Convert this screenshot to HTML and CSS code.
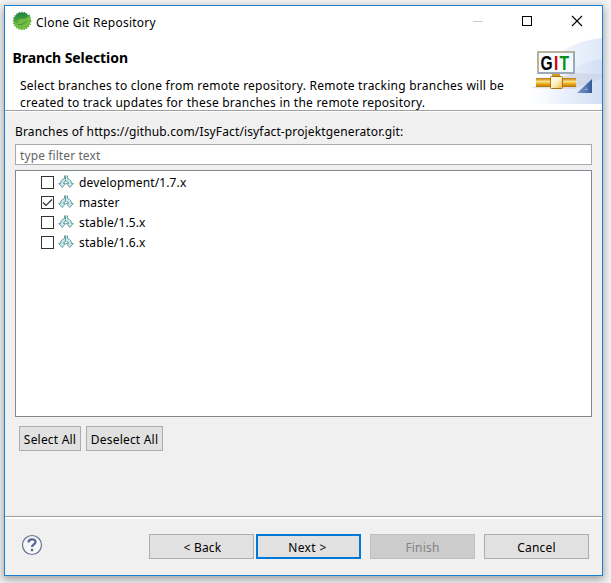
FILE: index.html
```html
<!DOCTYPE html>
<html lang="en">
<head>
<meta charset="utf-8">
<title>Clone Git Repository</title>
<link rel="stylesheet" href="styles.css">
</head>
<body>
<svg class="defs" width="0" height="0">
  <symbol id="branch" viewBox="0 0 16 14">
    <path d="M6.500 .5v3L4.500 4.500Q2.500 5.500 2.500 8.500H.7L4.300 12.500 7.500 8.500H5.500Q5.500 6.500 8 6.500T10.500 8.500H8.500L11.700 12.500 15.300 8.500H13.500Q13.500 5.500 11.500 4.500L9.500 3.500v-3z" fill="#c4eaec"/>
    <path d="M6.500 .5v3L4.500 4.500Q2.500 5.500 2.500 8.500H.7L4.300 12.500 7.500 8.500H5.500Q5.500 6.500 7.500 6.500V.5M9.500 .5v3L11.500 4.500Q13.500 5.500 13.500 8.500H15.300L11.700 12.500 8.500 8.500H10.500Q10.500 6.500 8.500 6.500" fill="none" stroke="#639599" stroke-width=".9"/>
  </symbol>
</svg>
<main class="window">
  <header class="titlebar">
    <svg class="app-icon" width="20" height="20" viewBox="0 0 20 20">
      <defs><linearGradient id="leaf" x1="0" y1="0" x2="0" y2="1"><stop stop-color="#20833d"/><stop offset="1" stop-color="#72bd40"/></linearGradient></defs>
      <circle cx="10" cy="10" r="8.400" fill="url(#leaf)"/>
      <circle cx="10" cy="10" r="8.700" fill="none" stroke="url(#leaf)" stroke-dasharray="1.300 1.300" stroke-width="1.200" pathLength="53"/>
      <path d="M17.700 3c2.500 7-.5 14-6 15-4 .7-7-.5-8.500-4.500C2.500 9 6 7.500 10 7.300c3.500-.2 6-1.300 7.700-4.300z" fill="#70bb40"/>
      <path d="M4.500 12c.5-3.500 2.500-4.300 5.500-4.600 4-.2 6-1.200 7.300-3.400M6 13.600c4 .2 6.500-.9 8.500-3.600" fill="none" stroke="#36903c" stroke-width=".9"/>
    </svg>
    <h1 class="title">Clone Git Repository</h1>
    <svg class="controls" width="112" height="16" viewBox="0 0 112 16">
      <path d="M1 8.500h10" stroke="#ccc"/>
      <rect x="50.500" y="3.500" width="9" height="9" fill="none" stroke="#000"/>
      <path d="M100 3l10 10M110 3l-10 10" stroke="#000" stroke-width="1.100"/>
    </svg>
  </header>
  <section class="banner">
    <div class="copy">
      <h2>Branch Selection</h2>
      <p><span class="line1">Select branches to clone from remote repository. Remote tracking branches will be</span><br><span class="line2">created to track updates for these branches in the remote repository.</span></p>
    </div>
    <svg class="art" width="75" height="66" viewBox="0 0 75 66">
      <defs>
        <linearGradient id="sky"><stop stop-color="#fff"/><stop offset="1" stop-color="#e0e9f9"/></linearGradient>
        <linearGradient id="sky2"><stop stop-color="#eef3fc" stop-opacity=".3"/><stop offset="1" stop-color="#d2def6"/></linearGradient>
        <linearGradient id="pipe" x1="0" y1="0" x2="0" y2="1"><stop stop-color="#b87a00"/><stop offset=".4" stop-color="#ffe18a"/><stop offset=".6" stop-color="#eeb52b"/><stop offset="1" stop-color="#b87100"/></linearGradient>
        <linearGradient id="joint" x1="0" y1="0" x2="1" y2="1"><stop stop-color="#fff"/><stop offset=".5" stop-color="#fff0c0"/><stop offset="1" stop-color="#e9b23a"/></linearGradient>
        <linearGradient id="corner"><stop stop-color="#839dc9"/><stop offset="1" stop-color="#335a98"/></linearGradient>
        <linearGradient id="shade"><stop stop-color="#bbb" stop-opacity=".45"/><stop offset="1" stop-color="#c6ccda" stop-opacity=".4"/></linearGradient>
      </defs>
      <path d="M0 66C4 30 35 4 75 0v66z" fill="url(#sky)"/>
      <path d="M20 66C26 42 47 25 75 21v45z" fill="url(#sky2)"/>
      <path d="M4 50L47 35 75 36V40L47 51z" fill="url(#shade)"/>
      <rect x="11" y="14" width="36" height="21" fill="#f3fbfc" stroke="#b5b39b" stroke-width="2"/>
      <path d="M47 14v21H11" fill="none" stroke="#9da9b8" stroke-width="2"/>
      <text class="git" transform="translate(13.500 31.500) scale(.78 1)">G<tspan fill="#d40010">I</tspan><tspan fill="#078b18">T</tspan></text>
      <path d="M25 36h8v4h-8z" fill="#d49a24"/>
      <path d="M9 40h40v9H9z" fill="url(#pipe)"/>
      <rect x="23.500" y="38.500" width="12" height="12" rx="1" fill="url(#joint)" stroke="#ad7210"/>
      <path d="M65 41v14H50z" fill="url(#corner)"/>
      <path d="M57 51.500h4M59.500 49.500v3" stroke="#86a2d0"/>
    </svg>
  </section>
  <section class="content">
    <label class="source" for="filter">Branches of https://github.com/IsyFact/isyfact-projektgenerator.git:</label>
    <input class="filter" id="filter" placeholder="type filter text">
    <ul class="list">
      <li><i class="box"></i><svg class="branch"><use href="#branch"/></svg><span>development/1.7.x</span></li>
      <li><i class="box"><svg width="11" height="11" viewBox="0 0 11 11"><path d="M1 5.500l3 3L10 2.500" fill="none" stroke="#333" stroke-width="1.200"/></svg></i><svg class="branch"><use href="#branch"/></svg><span>master</span></li>
      <li><i class="box"></i><svg class="branch"><use href="#branch"/></svg><span>stable/1.5.x</span></li>
      <li><i class="box"></i><svg class="branch"><use href="#branch"/></svg><span>stable/1.6.x</span></li>
    </ul>
    <div class="selection"><button class="all">Select All</button><button class="none">Deselect All</button></div>
  </section>
  <footer class="footer">
    <svg class="help" width="22" height="22" viewBox="0 0 22 22"><circle cx="11" cy="11" r="9.500" fill="#f7f7f8" stroke="#66738f" stroke-width="1.200"/><path d="M7.500 8.500C7.500 4.300 14.500 4.300 14.500 8c0 2.500-3.500 2.500-3.500 5M11 14.700v2.500" fill="none" stroke="#566894" stroke-width="2.300"/></svg>
    <button class="back">&lt; Back</button>
    <button class="next">Next &gt;</button>
    <button class="finish" disabled>Finish</button>
    <button class="cancel">Cancel</button>
  </footer>
</main>
</body>
</html>
```
FILE: styles.css
```css
* { box-sizing: border-box; }
body { margin: 0; padding: 5px 8px 7px 4px; height: 583px; overflow: hidden; background: #f3f3f3; color: #000; font: 12px/17px "Noto Sans", "Open Sans", sans-serif; }
.defs { position: absolute; }
.window { display: flex; flex-direction: column; width: 599px; height: 571px; border: 1px solid #1b80d2; background: #f0f0f0; box-shadow: 0 3px 8px 1px rgba(0,0,0,.32); }
.titlebar { display: flex; align-items: center; height: 32px; padding: 0 18px 2px 7px; background: #fff; }
.title { margin: 2px auto 0 4px; font-size: 12px; font-weight: 400; letter-spacing: .25px; }
.controls { flex: none; }
.banner { display: flex; justify-content: space-between; height: 74px; background: #fff; border-bottom: 1px solid #fff; box-shadow: inset 0 -1px #a0a0a0; }
.copy { width: 522px; padding: 11px 0 0 7.5px; white-space: nowrap; }
.copy h2 { margin: 0; font-size: 14px; line-height: 17px; letter-spacing: -.08px; }
.copy p { margin: 11px 0 0 7.5px; letter-spacing: .24px; }
.art { flex: none; }
.git { font: bold 20px "Liberation Sans", sans-serif; letter-spacing: 1.7px; }
.content { flex: 1; display: flex; flex-direction: column; padding: 11px 10px 0; }
.source { height: 21px; white-space: nowrap; letter-spacing: .135px; }
.filter { height: 21px; width: 577px; padding: 1px 4px 0; border: 1px solid #a9a9a9; border-radius: 0; background: #fff; font: inherit; letter-spacing: .1px; outline: 0; }
.filter::placeholder { color: #666; opacity: 1; }
.list { width: 577px; height: 247px; margin: 5px 0 9px; padding: 1px 0 0 25px; list-style: none; background: #fff; border: 1px solid #82878f; letter-spacing: .13px; }
.list li { display: flex; align-items: center; height: 20px; }
.box { width: 13px; height: 13px; border: 1px solid #333; background: #fff; margin: 1px 4px 0 0; }
.box svg { display: block; }
.branch { width: 16px; height: 14px; margin: -1px 5px 0 0; }
button { height: 25px; padding: 2px 0 0; border: 1px solid #adadad; border-radius: 0; background: #e1e1e1; color: #000; font: inherit; letter-spacing: .2px; white-space: nowrap; }
.selection { display: flex; gap: 5px; padding-left: 4px; }
.all { width: 62px; }
.none { width: 77px; }
.footer { display: flex; height: 59px; padding: 17px 13px 0 16px; border-top: 1px solid #a0a0a0; box-shadow: inset 0 2px #fff; }
.help { margin: 0 106px 0 0; }
.footer button { width: 105px; }
.footer .back { padding-left: 2px; }
.footer .next { margin: 0 9px 0 2px; border: 2px solid #0078d7; padding: 1px 2px 0 0; letter-spacing: .4px; }
.footer .finish { margin-right: 9px; background: #ccc; border-color: #bfbfbf; color: #838383; }
```
